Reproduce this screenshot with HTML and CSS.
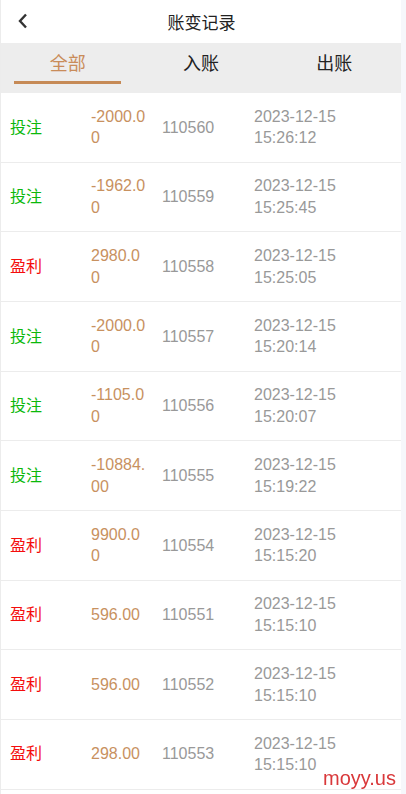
FILE: index.html
```html
<!DOCTYPE html>
<html lang="zh-CN">
  <head>
    <meta charset="UTF-8" />
    <meta name="viewport" content="width=device-width, initial-scale=1.0" />
    <title>账变记录</title>
    <link rel="stylesheet" href="styles.css">
  </head>
  <body>
    <div id="page">
      <!-- top bar -->
      <div class="header">
        <span class="back">
          <svg width="12" height="16" viewBox="0 0 12 16">
            <path d="M9 1.5 L3 8 L9 14.5" fill="none" stroke="#333" stroke-width="2.4" />
          </svg>
        </span>
        <div class="title">账变记录</div>
      </div>

      <!-- tabs -->
      <div class="tabs">
        <div class="tab active">全部</div>
        <div class="tab">入账</div>
        <div class="tab">出账</div>
      </div>

      <!-- records -->
      <div class="list">
        <div class="row">
          <div class="type bet">投注</div>
          <div class="amount">-2000.00</div>
          <div class="num">110560</div>
          <div class="time">2023-12-15 15:26:12</div>
        </div>
        <div class="row">
          <div class="type bet">投注</div>
          <div class="amount">-1962.00</div>
          <div class="num">110559</div>
          <div class="time">2023-12-15 15:25:45</div>
        </div>
        <div class="row">
          <div class="type win">盈利</div>
          <div class="amount">2980.00</div>
          <div class="num">110558</div>
          <div class="time">2023-12-15 15:25:05</div>
        </div>
        <div class="row">
          <div class="type bet">投注</div>
          <div class="amount">-2000.00</div>
          <div class="num">110557</div>
          <div class="time">2023-12-15 15:20:14</div>
        </div>
        <div class="row">
          <div class="type bet">投注</div>
          <div class="amount">-1105.00</div>
          <div class="num">110556</div>
          <div class="time">2023-12-15 15:20:07</div>
        </div>
        <div class="row">
          <div class="type bet">投注</div>
          <div class="amount">-10884.00</div>
          <div class="num">110555</div>
          <div class="time">2023-12-15 15:19:22</div>
        </div>
        <div class="row">
          <div class="type win">盈利</div>
          <div class="amount">9900.00</div>
          <div class="num">110554</div>
          <div class="time">2023-12-15 15:15:20</div>
        </div>
        <div class="row">
          <div class="type win">盈利</div>
          <div class="amount">596.00</div>
          <div class="num">110551</div>
          <div class="time">2023-12-15 15:15:10</div>
        </div>
        <div class="row">
          <div class="type win">盈利</div>
          <div class="amount">596.00</div>
          <div class="num">110552</div>
          <div class="time">2023-12-15 15:15:10</div>
        </div>
        <div class="row">
          <div class="type win">盈利</div>
          <div class="amount">298.00</div>
          <div class="num">110553</div>
          <div class="time">2023-12-15 15:15:10</div>
        </div>
      </div>
    </div>
    <div class="mark">moyy.us</div>
  </body>
</html>
```

FILE: styles.css
```css
html,
body {
  margin: 0;
  padding: 0;
}
body {
  background: #f6f7fb;
  font-family: "Liberation Sans", Arial, "Noto Sans CJK SC", sans-serif;
  color: #333;
  height: 794px;
  overflow: hidden;
}
#page {
  width: 401px;
  min-height: 794px;
  background: #fff;
  border-left: 1px solid #ececec;
  box-sizing: border-box;
}

.header {
  height: 43px;
  position: relative;
  display: flex;
  align-items: center;
  justify-content: center;
}
.header .back {
  position: absolute;
  left: 16px;
  top: 13px;
  display: flex;
}
.header .title {
  font-size: 17px;
  color: #222;
  margin-left: 1px;
}

.tabs {
  height: 50px;
  background: #ededed;
  display: flex;
}
.tab {
  flex: 1;
  text-align: center;
  font-size: 18px;
  color: #222;
  padding-top: 9px;
  line-height: 24px;
  position: relative;
}
.tab.active {
  color: #c98c5a;
}
.tab.active::after {
  content: "";
  position: absolute;
  left: 10%;
  right: 10%;
  top: 38px;
  height: 3px;
  background: #c68a56;
}

.row {
  height: 68.67px;
  border-bottom: 1px solid #ececec;
  display: flex;
  align-items: center;
  padding-left: 9px;
  font-size: 16px;
  line-height: 21.5px;
}
.type {
  width: 81px;
  font-size: 16px;
}
.type.bet {
  color: #0bb80b;
}
.type.win {
  color: #f40d0d;
}
.amount {
  width: 56px;
  margin-right: 15px;
  color: #c8915f;
  word-break: break-all;
}
.num {
  width: 92px;
  color: #999;
}
.time {
  width: 90px;
  color: #999;
}

.mark {
  position: fixed;
  right: 10px;
  bottom: 4px;
  font-size: 20px;
  color: #d9383a;
}
```
